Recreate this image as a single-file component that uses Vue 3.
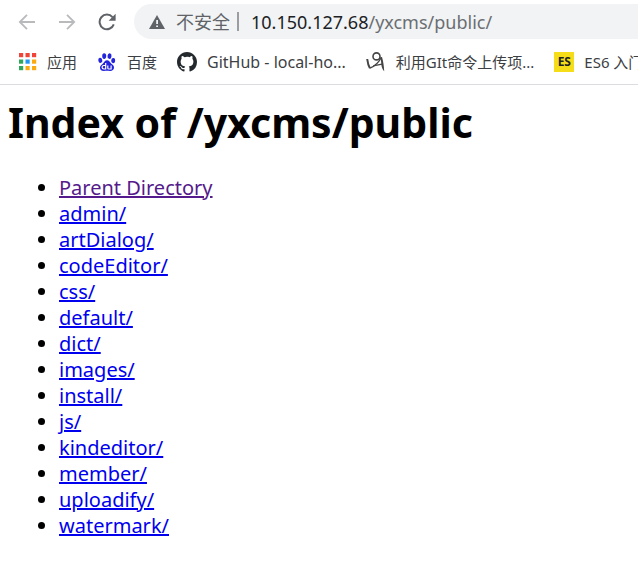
<script setup>
const entries = [
  'admin/', 'artDialog/', 'codeEditor/', 'css/', 'default/', 'dict/', 'images/',
  'install/', 'js/', 'kindeditor/', 'member/', 'uploadify/', 'watermark/'
]
const appColors = ['#f04438', '#f04438', '#f04438', '#2fa75b', '#2196f3', '#fbab10', '#2fa75b', '#fbab10', '#fbab10']
</script>

<template>
  <div class="browser">
    <header class="chrome">
      <div class="toolbar">
        <button type="button" class="nav" aria-label="Back">
          <svg width="18" height="18" viewBox="0 0 18 18" fill="none" stroke="#b9babc" stroke-width="1.8"><path d="M17 9H2M9 1.8L1.8 9L9 16.2" /></svg>
        </button>
        <button type="button" class="nav" aria-label="Forward">
          <svg width="18" height="18" viewBox="0 0 18 18" fill="none" stroke="#b9babc" stroke-width="1.8"><path d="M1 9h15M9 1.8L16.2 9L9 16.2" /></svg>
        </button>
        <button type="button" class="nav" aria-label="Reload">
          <svg width="18" height="18" viewBox="0 0 18 18"><path d="M15.8 11.4A7.3 7.3 0 1 1 14.5 4.2" fill="none" stroke="#5f6368" stroke-width="2" /><path d="M17.6 .8v7h-7z" fill="#5f6368" /></svg>
        </button>
        <div class="omnibox">
          <button type="button" class="security">
            <svg width="16" height="14" viewBox="0 0 16 14"><path d="M8 0L16 14H0z" fill="#5f6368" /><path d="M7.2 5h1.8v4H7.2zM7.2 10.4h1.8v1.7H7.2z" fill="#f1f3f4" /></svg>
            <span>不安全</span>
          </button>
          <span class="divider"></span>
          <div class="address" role="textbox" aria-label="Address" contenteditable="true" spellcheck="false"><span class="host">10.150.127.68</span>/yxcms/public/</div>
        </div>
      </div>
      <nav class="bookmarks" aria-label="Bookmarks">
        <a href="#" class="bookmark">
          <svg width="18" height="18" viewBox="0 0 18 18">
            <rect v-for="(color, i) in appColors" :key="i" :x="(i % 3) * 6.5" :y="Math.floor(i / 3) * 6.5" width="4.2" height="4.2" :fill="color" />
          </svg>
          <span>应用</span>
        </a>
        <a href="#" class="bookmark">
          <svg width="20" height="20" viewBox="-1 -1 20 20" fill="#2424dc">
            <ellipse cx="6.2" cy="3.1" rx="2" ry="2.8" />
            <ellipse cx="11.5" cy="3.1" rx="2" ry="2.8" transform="rotate(8 11.5 3.1)" />
            <ellipse cx="2.3" cy="7.3" rx="2" ry="2.6" transform="rotate(-12 2.3 7.3)" />
            <ellipse cx="15.2" cy="7.6" rx="2" ry="2.6" transform="rotate(8 15.2 7.6)" />
            <path d="M9 7.200c2 0 2.700 1.800 4.100 3.200 1.900 1.300 3.200 2.500 2.900 4.700-.3 2-1.800 2.900-4 2.800-1.200-.1-2-.2-3-.2s-2 .2-3.200.2c-2.300 0-3.700-1-3.800-3.200-.1-2 1.500-3 3-4.300C6.500 9 7 7.200 9 7.200z" />
            <path d="M7.700 10v6H5.900c-2.400 0-2.400-3.500 0-3.500h1.800M9.800 12.400v2.500c0 .8.400 1.100 1.100 1.100h2.200v-3.600" fill="none" stroke="#fff" stroke-width="1.200" />
          </svg>
          <span>百度</span>
        </a>
        <a href="#" class="bookmark latin">
          <svg width="20" height="20" viewBox="0 0 16 16"><path fill="#24292e" d="M8 0C3.58 0 0 3.58 0 8c0 3.54 2.29 6.53 5.47 7.59.4.07.55-.17.55-.38 0-.19-.01-.82-.01-1.49-2.01.37-2.53-.49-2.69-.94-.09-.23-.48-.94-.82-1.13-.28-.15-.68-.52-.01-.53.63-.01 1.08.58 1.23.82.72 1.21 1.87.87 2.33.66.07-.52.28-.87.51-1.07-1.78-.2-3.64-.89-3.64-3.95 0-.87.31-1.59.82-2.15-.08-.2-.36-1.02.08-2.12 0 0 .67-.21 2.2.82A7.65 7.65 0 0 1 8 3.86c.68 0 1.36.09 2 .27 1.53-1.04 2.2-.82 2.2-.82.44 1.1.16 1.92.08 2.12.51.56.82 1.27.82 2.15 0 3.07-1.87 3.75-3.65 3.95.29.25.54.73.54 1.48 0 1.07-.01 1.93-.01 2.2 0 .21.15.46.55.38A8.01 8.01 0 0 0 16 8c0-4.42-3.58-8-8-8z" /></svg>
          <span>GitHub - local-ho...</span>
        </a>
        <a href="#" class="bookmark">
          <svg width="20" height="20" viewBox="0 0 20 20" fill="none" stroke="#454545" stroke-linejoin="round">
            <circle cx="10.500" cy="4.400" r="3.500" stroke-width="1.600" />
            <path d="M1.200 7c.5 4 1.300 6.900 2.700 9.200" stroke-width="2" />
            <path d="M3.900 16.200C8.500 14.200 12.800 10.500 15.200 5.500" stroke-width="1.400" />
            <path d="M7.300 13.800l8.700-1.700" stroke-width="1.300" />
            <path d="M14.600 5.200l1.400-.2c1.300 4.400 1.900 9.200 2.200 14.200-1.200-1-2.200-3-2.700-5.500z" fill="#454545" stroke="none" />
          </svg>
          <span>利用GIt命令上传项...</span>
        </a>
        <a href="#" class="bookmark">
          <span class="es-logo">ES</span>
          <span>ES6 入门</span>
        </a>
      </nav>
    </header>
    <main class="page">
      <h1>Index of /yxcms/public</h1>
      <ul>
        <li><a href="#" class="visited">Parent Directory</a></li>
        <li v-for="entry in entries" :key="entry"><a href="#">{{ entry }}</a></li>
      </ul>
    </main>
  </div>
</template>

<style>
body {
  background: #fff;
}
</style>

<style scoped>
.browser {
  font-family: "Noto Sans", "Noto Sans CJK SC", sans-serif;
  color: #000;
}
.chrome {
  border-bottom: 1px solid #dadce0;
  overflow: hidden;
}
.toolbar {
  display: flex;
  align-items: center;
  padding: 4px 0 0 18px;
  gap: 22px;
}
.nav {
  display: flex;
  flex: none;
  padding: 0;
  border: 0;
  background: none;
}
.omnibox {
  display: flex;
  align-items: center;
  flex: 1;
  min-width: 0;
  height: 35px;
  margin-left: -4px;
  padding-left: 15px;
  border-radius: 18px 0 0 18px;
  background: #f1f3f4;
  color: #6b6e72;
  font-size: 18px;
  line-height: 24px;
  white-space: nowrap;
}
.security {
  display: flex;
  align-items: center;
  gap: 11px;
  padding: 0;
  border: 0;
  background: none;
  color: #5f6368;
  font: inherit;
}
.divider {
  width: 2px;
  height: 19px;
  margin: 0 12px 0 7px;
  background: #9b9da0;
}
.address {
  outline: 0;
}
.host {
  color: #202124;
}
.bookmarks {
  display: flex;
  align-items: center;
  height: 45px;
  padding-left: 19px;
  gap: 20px;
  white-space: nowrap;
}
.bookmark {
  display: flex;
  flex: none;
  align-items: center;
  gap: 10px;
  color: #3c4043;
  font-size: 15px;
  line-height: 20px;
  text-decoration: none;
}
.latin {
  font-size: 16px;
}
.bookmark svg {
  flex: none;
}
.es-logo {
  width: 20px;
  height: 20px;
  background: #f5de19;
  color: #222;
  font-family: "Open Sans", sans-serif;
  font-size: 12px;
  font-weight: 700;
  text-align: center;
}
.page {
  padding: 8px;
}
h1 {
  margin: 0;
  font-size: 41px;
  line-height: 58px;
  font-weight: 700;
}
ul {
  margin: 24px 0 0;
  padding-left: 51px;
  font-size: 20px;
  line-height: 26px;
}
a {
  color: #0000ee;
}
.visited {
  color: #551a8b;
}
</style>
